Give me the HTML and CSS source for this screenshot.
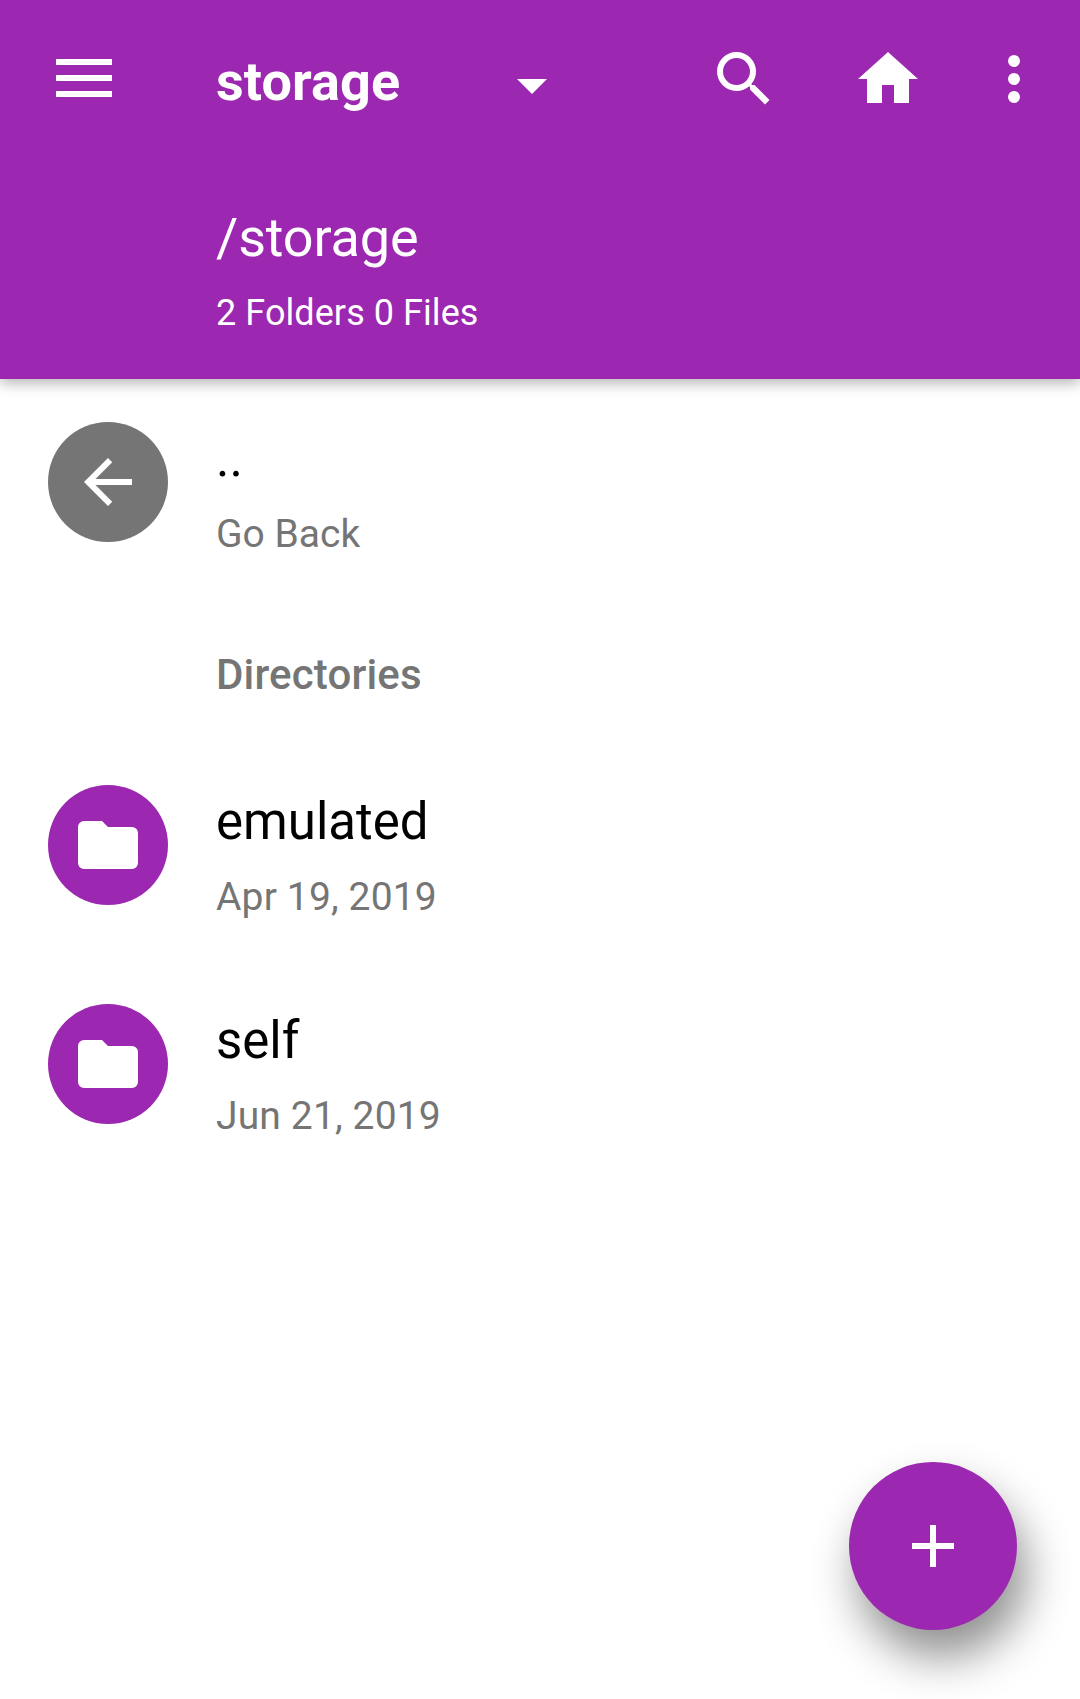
FILE: index.html
```html
<!DOCTYPE html>
<html lang="en">
<head>
<meta charset="utf-8">
<title>storage</title>
<link rel="stylesheet" href="styles.css">
</head>
<body>
<header class="header">
  <div class="toolbar">
    <svg class="menu" viewBox="0 0 56 38"><path d="M0 0h56v6H0zM0 16h56v6H0zM0 32h56v6H0z"/></svg>
    <h1 class="title">storage</h1>
    <svg class="caret" viewBox="0 0 30 15"><path d="M0 0h30L15 15z"/></svg>
    <nav class="actions">
      <svg class="icon" viewBox="0 0 24 24"><path d="M15.5 14h-.79l-.28-.27A6.47 6.47 0 0 0 16 9.5 6.5 6.5 0 1 0 9.5 16c1.61 0 3.09-.59 4.23-1.57l.27.28v.79l5 4.99L20.49 19l-4.99-5zm-6 0C7.01 14 5 11.99 5 9.5S7.01 5 9.5 5 14 7.01 14 9.5 11.99 14 9.5 14z"/></svg>
      <svg class="icon" viewBox="0 0 24 24"><path d="M10 20v-6h4v6h5v-8h3L12 3 2 12h3v8z"/></svg>
      <svg class="icon" viewBox="0 0 24 24"><circle cx="12" cy="6" r="2"/><circle cx="12" cy="12" r="2"/><circle cx="12" cy="18" r="2"/></svg>
    </nav>
  </div>
  <p class="path">/storage</p>
  <p class="summary">2 Folders 0 Files</p>
</header>
<main class="list">
  <div class="row">
    <span class="avatar back"><svg class="icon" viewBox="0 0 24 24"><path d="M20 11H7.83l5.59-5.59L12 4l-8 8 8 8 1.41-1.41L7.83 13H20z"/></svg></span>
    <div><p class="name">..</p><p class="detail action">Go Back</p></div>
  </div>
  <h2 class="section">Directories</h2>
  <div class="row">
    <span class="avatar"><svg class="icon" viewBox="0 0 24 24"><path d="M10 4H4a2 2 0 0 0-2 2v12a2 2 0 0 0 2 2h16a2 2 0 0 0 2-2V8a2 2 0 0 0-2-2h-8z"/></svg></span>
    <div><p class="name">emulated</p><p class="detail">Apr 19, 2019</p></div>
  </div>
  <div class="row">
    <span class="avatar"><svg class="icon" viewBox="0 0 24 24"><path d="M10 4H4a2 2 0 0 0-2 2v12a2 2 0 0 0 2 2h16a2 2 0 0 0 2-2V8a2 2 0 0 0-2-2h-8z"/></svg></span>
    <div><p class="name">self</p><p class="detail">Jun 21, 2019</p></div>
  </div>
</main>
<button class="fab" aria-label="Add"><svg class="icon" viewBox="0 0 24 24"><path d="M19 13h-6v6h-2v-6H5v-2h6V5h2v6h6z"/></svg></button>
</body>
</html>
```
FILE: styles.css
```css
* { box-sizing: border-box; margin: 0; }
body {
  min-height: 1699px;
  background: #fff;
  color: #000;
  font-family: Roboto, sans-serif;
}
svg { display: block; fill: #fff; flex: none; }
.icon { width: 72px; height: 72px; }

.header {
  height: 379px;
  background: #9c27b0;
  color: #fff;
  box-shadow: 0 4px 13px rgba(0, 0, 0, .3);
}
.toolbar { display: flex; height: 158px; padding-left: 56px; }
.menu { width: 56px; height: 38px; margin-top: 59px; }
.title {
  width: 300px;
  margin: 42px 0 0 104px;
  font-size: 54px;
  font-weight: 700;
  line-height: 80px;
  letter-spacing: .1px;
}
.caret { width: 30px; height: 15px; margin: 79px 0 0 1px; }
.actions { display: flex; gap: 72px; margin: 43px 0 0 161px; }
.actions .icon:last-child { margin-left: -18px; }
.path { padding: 40px 0 0 216px; font-size: 54px; line-height: 80px; letter-spacing: -.15px; }
.summary { padding: 11px 0 0 216px; font-size: 36px; line-height: 48px; letter-spacing: .07px; }

.list { padding-top: 17px; }
.row { display: flex; gap: 48px; height: 219px; padding: 26px 48px 0; }
.avatar {
  display: flex;
  align-items: center;
  justify-content: center;
  width: 120px;
  height: 120px;
  border-radius: 50%;
  background: #9c27b0;
}
.back { background: #757575; }
.name { margin-top: 7px; font-size: 51px; line-height: 60px; }
.detail { margin-top: 20px; font-size: 39px; line-height: 50px; letter-spacing: .15px; color: #757575; }
.action { letter-spacing: 0; }
.section {
  height: 144px;
  padding-left: 216px;
  font-size: 42px;
  font-weight: 500;
  line-height: 120px;
  letter-spacing: .15px;
  color: #757575;
}

.fab {
  position: fixed;
  right: 63px;
  bottom: 69px;
  display: flex;
  align-items: center;
  justify-content: center;
  width: 168px;
  height: 168px;
  padding: 0;
  border: 0;
  border-radius: 50%;
  background: #9c27b0;
  box-shadow: 9px 27px 45px rgba(0, 0, 0, .44);
}
```
